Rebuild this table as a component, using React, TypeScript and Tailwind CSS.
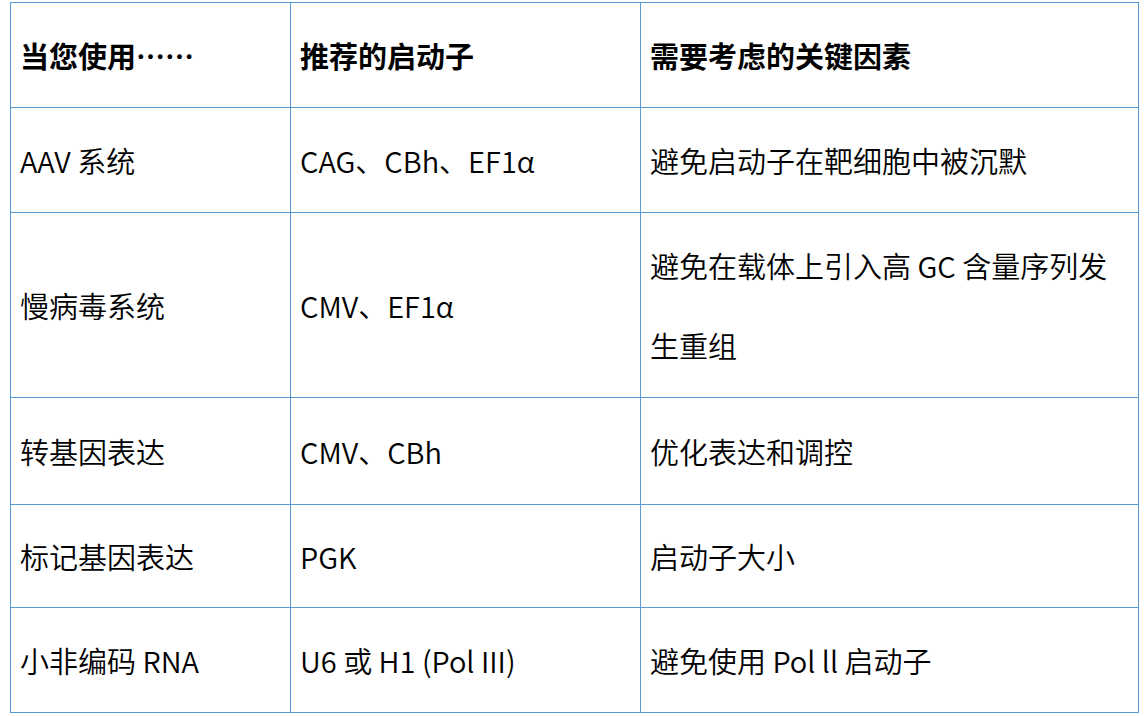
import React from 'react';

const rows = [
  { h: 'py-[12px]', c: ['AAV 系统', 'CAG、CBh、EF1α', '避免启动子在靶细胞中被沉默'] },
  { h: 'py-[12px]', c: ['慢病毒系统', 'CMV、EF1α', '避免在载体上引入高 GC 含量序列发生重组'] },
  { h: 'py-[13px]', c: ['转基因表达', 'CMV、CBh', '优化表达和调控'] },
  { h: 'py-[11px]', c: ['标记基因表达', 'PGK', '启动子大小'] },
  { h: 'py-[12px]', c: ['小非编码 RNA', 'U6 或 H1 (Pol III)', '避免使用 Pol ll 启动子'] },
];

export default function App() {
  const cell = 'border border-[#5b9bd5] px-[9px] align-middle text-left';

  return (
    <div className="min-h-screen bg-white pl-[10px] pt-[2px] text-black font-['Noto_Sans_CJK_SC','Noto_Sans',sans-serif] text-[29px] leading-[80px]">
      <table className="border-collapse w-[1128px] table-fixed">
        <colgroup>
          <col className="w-[280px]" />
          <col className="w-[350px]" />
          <col className="w-[498px]" />
        </colgroup>
        <thead>
          <tr>
            <th className={`${cell} py-[12px] font-bold`}>当您使用……</th>
            <th className={`${cell} py-[12px] font-bold`}>推荐的启动子</th>
            <th className={`${cell} py-[12px] font-bold`}>需要考虑的关键因素</th>
          </tr>
        </thead>
        <tbody>
          {rows.map((r) => (
            <tr key={r.c[0]}>
              {r.c.map((c, i) => (
                <td key={i} className={`${cell} ${r.h} font-[350]`}>
                  {c}
                </td>
              ))}
            </tr>
          ))}
        </tbody>
      </table>
    </div>
  );
}
